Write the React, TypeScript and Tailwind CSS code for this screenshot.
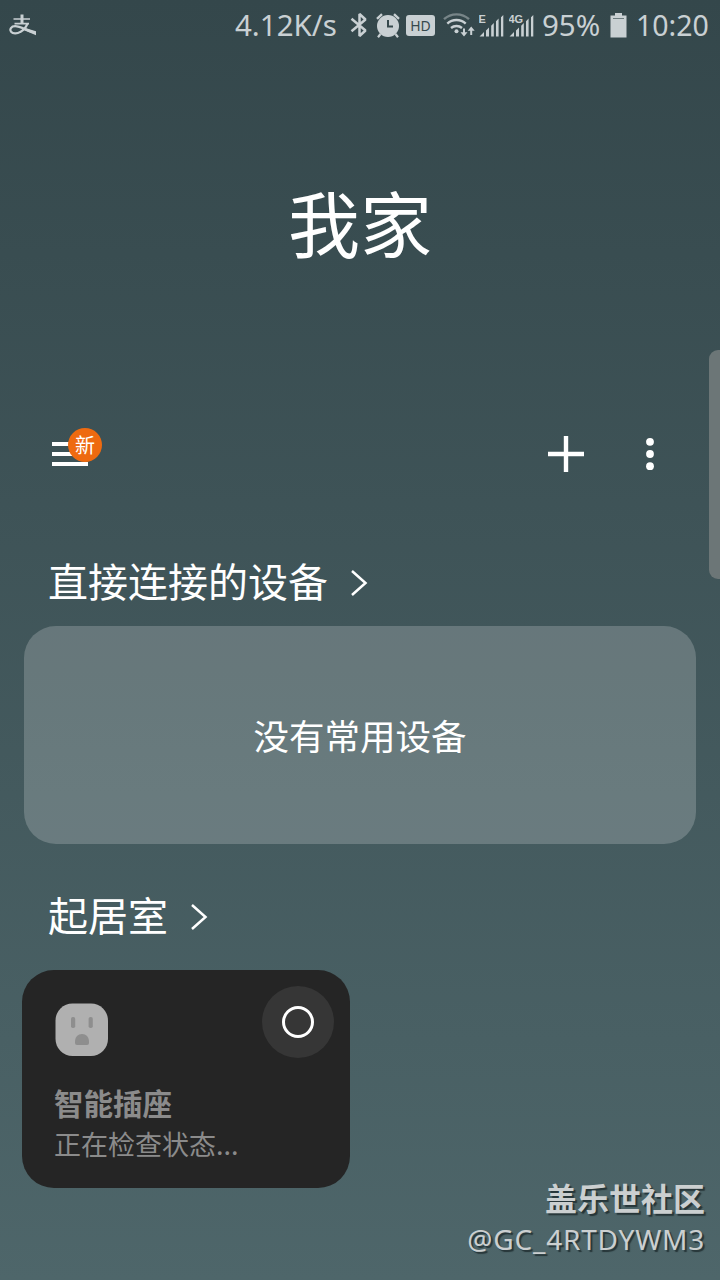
import React from 'react';

const statusColor = '#c9d0d3';

function AlipayIcon() {
  return (
    <svg className="w-[28px] h-[22px]" viewBox="0 0 28 22" fill="none" stroke={statusColor}>
      <path d="M4.500 5h16.500M5.500 9.600h14.500" strokeWidth="1.700" />
      <path d="M13 0.500v9" strokeWidth="3" />
      <path d="M18.500 9.500c-1.500 3.800-4 6.800-7.200 8.400c-2.800 1.600-7.200 2.300-9.200-0.200c-1.800-2.400 0-5.500 4-5.500c4.500 0 11.500 4 19 6.300" strokeWidth="2.200" />
      <path d="M15.500 13.800L27 17.200v4L14 15.800z" fill={statusColor} stroke="none" />
    </svg>
  );
}

function BluetoothIcon() {
  return (
    <svg className="w-[18px] h-[26px]" viewBox="0 0 18 26" fill="none" stroke={statusColor} strokeWidth="2.500" strokeLinejoin="bevel">
      <path d="M1.500 6.800L15.500 18.500L9.500 24V2L15.500 7.500L1.500 19.200" />
    </svg>
  );
}

function AlarmIcon() {
  return (
    <svg className="w-[24px] h-[25px]" viewBox="0 0 24 25" fill={statusColor}>
      <circle cx="12" cy="13" r="11" />
      <path d="M1 5.800L6 1.200M23 5.800L18 1.200" stroke={statusColor} strokeWidth="2.400" />
      <path d="M4.500 21l-2.500 3.200M19.500 21l2.500 3.200" stroke={statusColor} strokeWidth="2.200" />
      <path d="M12 7v6.500h5" fill="none" stroke="#36494d" strokeWidth="2" />
    </svg>
  );
}

function WifiIcon() {
  return (
    <svg className="w-[33px] h-[25px]" viewBox="0 0 33 25" fill="none" stroke={statusColor} strokeWidth="2.400">
      <path d="M1 6.200a18.500 18.500 0 0 1 25 0" opacity="0.450" />
      <path d="M4.300 10.600a13.500 13.500 0 0 1 18.400 0" />
      <path d="M8 15a8.500 8.500 0 0 1 11 0" />
      <circle cx="13.500" cy="18.200" r="2" fill={statusColor} stroke="none" />
      <path d="M21 15.500v6M28.200 22v-6" strokeWidth="2" />
      <path d="M17.500 19.200h7L21 23.600zM24.700 17.700h7L28.200 13.500z" fill={statusColor} stroke="none" />
    </svg>
  );
}

function SignalIcon({ label }: { label: string }) {
  return (
    <svg className="w-[26px] h-[24px]" viewBox="0 0 26 24" fill={statusColor}>
      <path d="M0.500 23.500L5 19v4.500zM7 17.500l3-3v9h-3zM12.200 12.700l2.600-2.600v13.400h-2.600zM17 8.200l2.600-2.600v17.900h-2.600zM22 4.200l2.300-2.300v21.600H22z" />
      <text x="-0.500" y="9.500" className="font-['Liberation_Sans'] text-[11px] font-bold">
        {label}
      </text>
    </svg>
  );
}

function BatteryIcon() {
  return (
    <svg className="w-[17px] h-[25px]" viewBox="0 0 17 25" fill={statusColor}>
      <path d="M5 0h7v2.500h4.500V24.500H0.500V2.500H5z" />
      <path d="M3 5.500h11" stroke="#6b7a7d" strokeWidth="1" />
    </svg>
  );
}

function StatusBar() {
  return (
    <div className="h-[50px] flex items-center pl-[9px] pr-[10px] text-[#c9d0d3] text-[29.5px] leading-[50px] font-['Noto_Sans',sans-serif]">
      <AlipayIcon />
      <div className="ml-auto flex items-center whitespace-nowrap">
        <span className="w-[104px]">4.12K/s</span>
        <span className="ml-[11px]"><BluetoothIcon /></span>
        <span className="ml-[8px]"><AlarmIcon /></span>
        <span className="ml-[6px] w-[29px] h-[21px] rounded-[3px] bg-[#c9d0d3] text-[#36494d] text-[14px] leading-[21px] text-center">HD</span>
        <span className="ml-[8px]"><WifiIcon /></span>
        <span className="ml-[3px]"><SignalIcon label="E" /></span>
        <span className="ml-[4px]"><SignalIcon label="4G" /></span>
        <span className="ml-[7px] w-[61px]">95%</span>
        <span className="ml-[7px]"><BatteryIcon /></span>
        <span className="ml-[9px] w-[74px] text-[28.5px]">10:20</span>
      </div>
    </div>
  );
}

function Toolbar() {
  return (
    <div className="h-[72px] flex items-center justify-between pl-[52px] pr-[62px]">
      <div className="relative w-[36px] h-[24px] flex flex-col justify-between">
        <div className="h-[4px] bg-white" />
        <div className="h-[4px] bg-white" />
        <div className="h-[4px] bg-white" />
        <span className="absolute left-[16px] -top-[14px] w-[34px] h-[34px] rounded-full bg-[#ee6a10] text-[20px] leading-[34px] text-center">
          新
        </span>
      </div>
      <div className="flex items-center gap-[58px]">
        <svg className="w-[36px] h-[36px]" viewBox="0 0 36 36" stroke="#fff" strokeWidth="4.400">
          <path d="M0 18h36M18 0v36" />
        </svg>
        <svg className="w-[16px] h-[36px]" viewBox="0 0 16 36" fill="#fff">
          <circle cx="8" cy="5.800" r="3.900" />
          <circle cx="8" cy="18" r="3.900" />
          <circle cx="8" cy="30.200" r="3.900" />
        </svg>
      </div>
    </div>
  );
}

function SectionTitle({ children }: { children: React.ReactNode }) {
  return (
    <div className="h-[60px] pl-[48px] flex items-center">
      <h2 className="text-[40px] leading-[56px] pb-[4px]">{children}</h2>
      <svg className="ml-[22px] mt-[2px] w-[18px] h-[28px]" viewBox="0 0 18 28" fill="none" stroke="#fff" strokeWidth="2.500">
        <path d="M2 2l13.500 12L2 26" />
      </svg>
    </div>
  );
}

function OutletIcon() {
  return (
    <svg className="w-[54px] h-[54px]" viewBox="0 0 54 54">
      <rect x="1.500" y="0.500" width="52.500" height="52.500" rx="17" fill="#b0b0b0" />
      <rect x="17" y="14" width="4.200" height="11" rx="1.800" fill="#8e8e8e" />
      <rect x="34.600" y="14" width="4.200" height="11" rx="1.800" fill="#8e8e8e" />
      <path d="M21 38.500c0-4.500 3-7.500 7-7.500s7 3 7 7.500v1.500q0 2-2 2H23q-2 0-2-2z" fill="#8e8e8e" />
    </svg>
  );
}

function DeviceCard() {
  return (
    <div className="ml-[22px] w-[328px] h-[218px] rounded-[32px] bg-[#252525] pt-4 pl-[32px] pr-4 text-[#8b8b8b]">
      <div className="flex justify-between">
        <div className="mt-[17px]">
          <OutletIcon />
        </div>
        <div className="w-[72px] h-[72px] rounded-full bg-[#363636] flex items-center justify-center">
          <div className="w-[32px] h-[32px] rounded-full border-[3px] border-white" />
        </div>
      </div>
      <div className="mt-[22px] text-[29.5px] leading-[44px] font-bold">智能插座</div>
      <div className="text-[27px] leading-[39px]">正在检查状态...</div>
    </div>
  );
}

export default function App() {
  return (
    <div className="relative w-[720px] h-[1280px] overflow-hidden bg-linear-to-b from-[#34474b] to-[#4e666a] text-white font-['Noto_Sans_CJK_SC',sans-serif]">
      <StatusBar />
      <h1 className="mt-[119px] h-[109px] text-[72px] leading-[104px] text-center">我家</h1>
      <div className="mt-[140px]">
        <Toolbar />
      </div>

      <div className="mt-[62px]">
        <SectionTitle>直接连接的设备</SectionTitle>
      </div>
      <div className="mt-[14px] mx-6 h-[218px] rounded-[32px] bg-white/20 flex items-center justify-center text-[35.5px]">
        没有常用设备
      </div>

      <div className="mt-[42px]">
        <SectionTitle>起居室</SectionTitle>
      </div>
      <div className="mt-[24px]">
        <DeviceCard />
      </div>

      {/* edge panel handle */}
      <div className="absolute left-[709px] top-[350px] w-[20px] h-[229px] rounded-[9px] bg-[#6c7677]" />

      {/* watermark */}
      <div className="absolute right-[15px] top-[1174px] text-right text-[#cbcfd0] [text-shadow:2px_2px_1px_#263538]">
        <div className="text-[32px] leading-[46px] font-bold">盖乐世社区</div>
        <div className="text-[28px] leading-[38px] tracking-[0.8px] font-['Noto_Sans',sans-serif]">@GC_4RTDYWM3</div>
      </div>
    </div>
  );
}
